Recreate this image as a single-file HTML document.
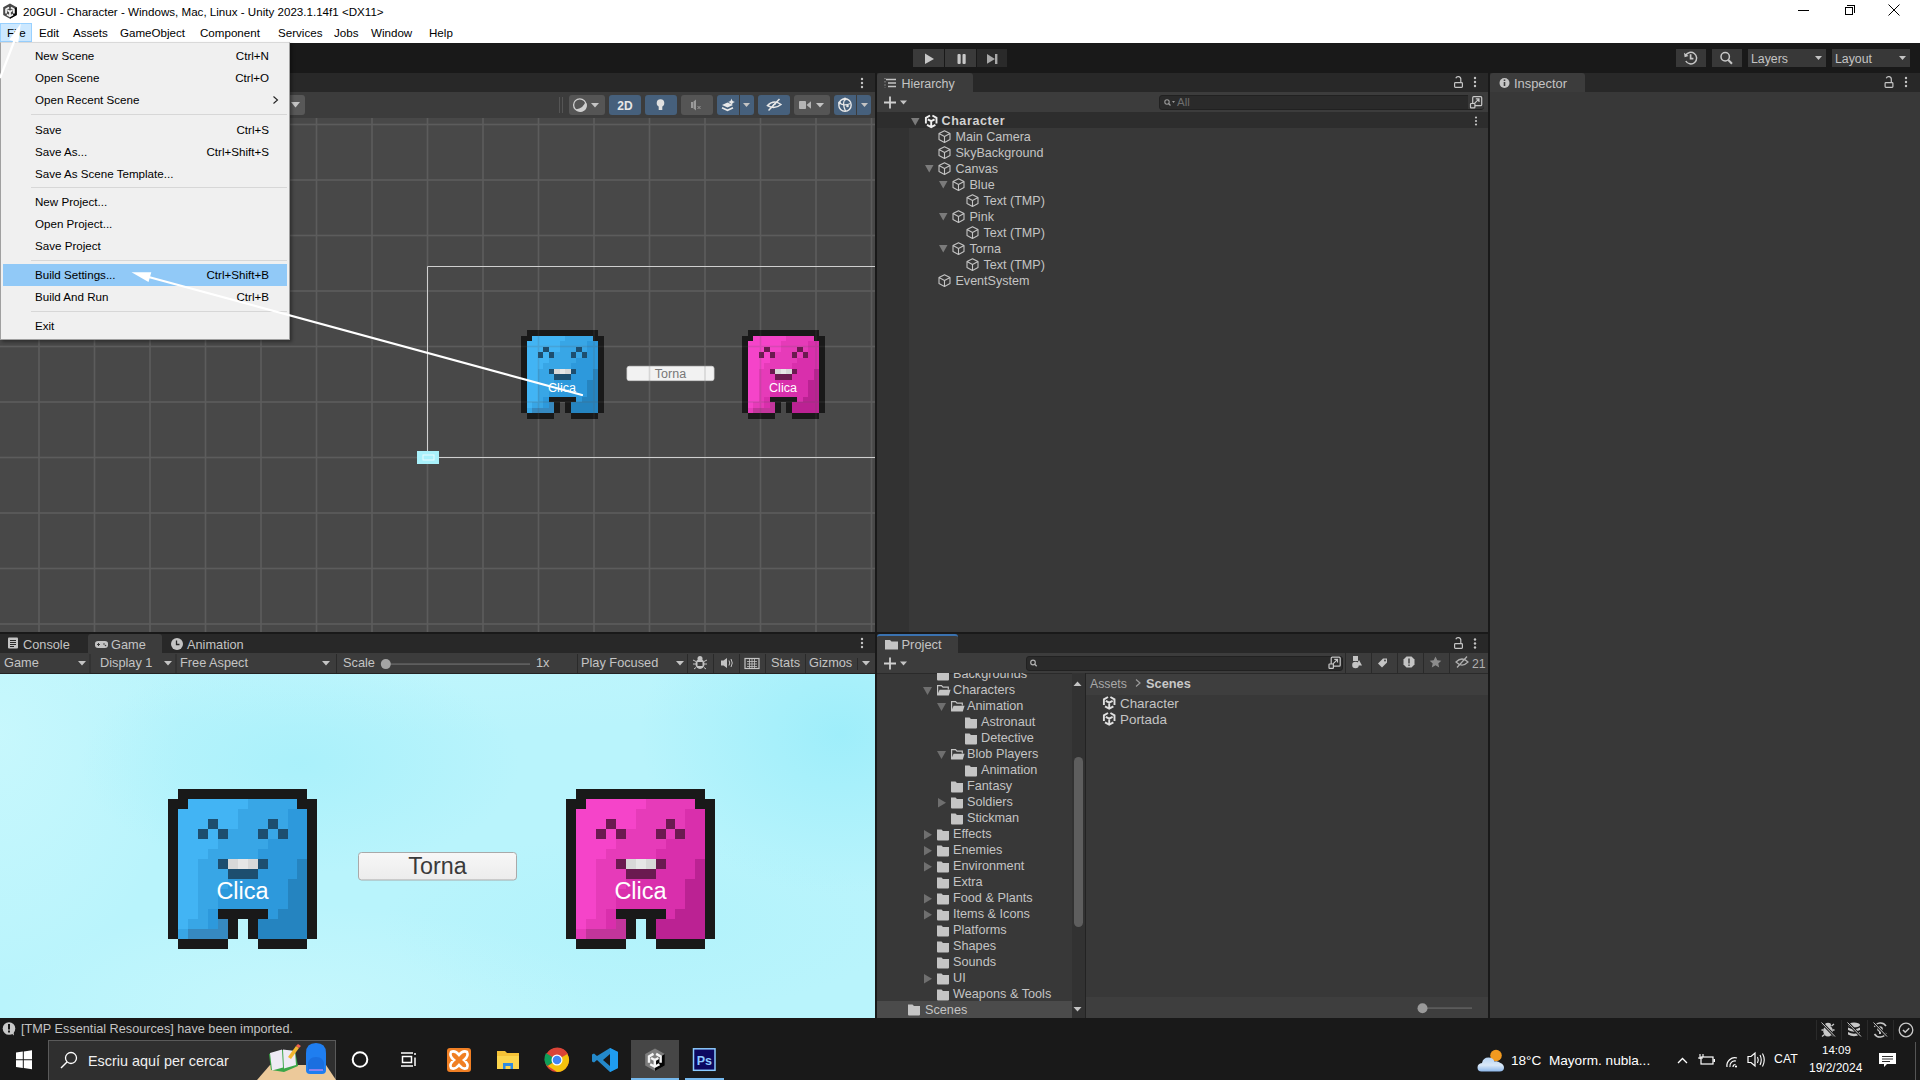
<!DOCTYPE html>
<html><head><meta charset="utf-8">
<style>
*{box-sizing:border-box;margin:0;padding:0}
html,body{width:1920px;height:1080px;overflow:hidden;background:#191919;font-family:"Liberation Sans",sans-serif;font-size:12px;color:#c4c4c4}
.a{position:absolute}
.t{position:absolute;white-space:nowrap;line-height:1}
#titlebar{left:0;top:0;width:1920px;height:43px;background:#fff}
.panel{position:absolute;background:#383838}
.tabbar{position:absolute;left:0;top:0;right:0;height:19px;background:#282828}
.tab{position:absolute;top:0;height:19px;background:#3c3c3c;border-radius:3px 3px 0 0}
</style></head>
<body>
<div id="titlebar" class="a"></div>
<!-- title -->

<div class="a" style="left:0;top:43px;width:1920px;height:30px;background:#191919"></div>
<!-- TITLE & MENU -->
<svg class="a" style="left:3px;top:3px" width="15" height="16"><path d="M7 0.5 L13.8 4.3 V11.9 L7 15.7 L0.2 11.9 V4.3Z" fill="#4a4a4a"/><path d="M13.8 4.3 V11.9 L7 15.7 V12.5 L11 10 V5.5Z" fill="#050505"/><g transform="translate(2.4,3.4) scale(0.74)" fill="none" stroke="#f0f0f0" stroke-width="2.4"><path d="M0.9 9.6 V3.9 L5 1.5 M7.4 1.5 L11.5 3.9 V9.6 M2 10.9 L6.2 13.2 L10.4 10.9 M2.8 5.3 L6.2 7.2 L9.6 5.3 M6.2 7.2 V13"/></g></svg>
<div class="t" id="title" style="left:23px;top:6px;color:#000;font-size:11.6px">20GUI - Character - Windows, Mac, Linux - Unity 2023.1.14f1 &lt;DX11&gt;</div>
<div class="a" style="left:1798px;top:10px;width:11px;height:1px;background:#000"></div>
<div class="a" style="left:1845px;top:7px;width:8px;height:8px;border:1px solid #000"></div>
<div class="a" style="left:1847px;top:5px;width:8px;height:8px;border-top:1px solid #000;border-right:1px solid #000"></div>
<svg class="a" style="left:1888px;top:4px" width="12" height="12"><path d="M0.5 0.5L11.5 11.5M11.5 0.5L0.5 11.5" stroke="#000" stroke-width="1"/></svg>
<div class="a" style="left:0;top:23px;width:32px;height:19px;background:#cce8ff;border:1px solid #99d1ff"></div>
<div class="t" style="left:7px;top:27px;color:#000;font-size:11.6px">File</div>
<div class="t" style="left:39px;top:27px;color:#000;font-size:11.6px">Edit</div>
<div class="t" style="left:73px;top:27px;color:#000;font-size:11.6px">Assets</div>
<div class="t" style="left:120px;top:27px;color:#000;font-size:11.6px">GameObject</div>
<div class="t" style="left:200px;top:27px;color:#000;font-size:11.6px">Component</div>
<div class="t" style="left:278px;top:27px;color:#000;font-size:11.6px">Services</div>
<div class="t" style="left:334px;top:27px;color:#000;font-size:11.6px">Jobs</div>
<div class="t" style="left:371px;top:27px;color:#000;font-size:11.6px">Window</div>
<div class="t" style="left:429px;top:27px;color:#000;font-size:11.6px">Help</div>
<!-- main toolbar buttons -->
<div class="a" style="left:913px;top:49px;width:31px;height:18px;background:#3a3a3a"></div>
<div class="a" style="left:945px;top:49px;width:31px;height:18px;background:#3a3a3a"></div>
<div class="a" style="left:977px;top:49px;width:30px;height:18px;background:#2a2a2a"></div>
<svg class="a" style="left:913px;top:49px" width="95" height="18"><path d="M12 4.5 L21 10 L12 15Z" fill="#c8c8c8"/><rect x="44.5" y="5" width="3.2" height="10" rx="1" fill="#c8c8c8"/><rect x="49.5" y="5" width="3.2" height="10" rx="1" fill="#c8c8c8"/><path d="M74 5 L82 10 L74 14.8Z" fill="#a8a8a8"/><rect x="82" y="5" width="2.4" height="10" fill="#a8a8a8"/></svg>










<!-- SCENE VIEW -->
<div class="a" style="left:0;top:73px;width:875px;height:19px;background:#282828"></div>
<div class="a" style="left:0;top:92px;width:875px;height:26px;background:#3c3c3c"></div>
<div class="a" style="left:0;top:118px;width:875px;height:514px;background:#484848;overflow:hidden">
<svg class="a" style="left:0;top:0" width="875" height="514">
<defs><g id="sb" shape-rendering="crispEdges"><rect x="1" y="0" width="13" height="1" fill="#191919"/><rect x="0" y="1" width="2" height="1" fill="#191919"/><rect x="2" y="1" width="6" height="1" fill="#42b4f4"/><rect x="8" y="1" width="5" height="1" fill="#38a6e6"/><rect x="13" y="1" width="2" height="1" fill="#191919"/><rect x="0" y="2" width="1" height="1" fill="#191919"/><rect x="1" y="2" width="6" height="1" fill="#42b4f4"/><rect x="7" y="2" width="5" height="1" fill="#38a6e6"/><rect x="12" y="2" width="2" height="1" fill="#2d99dc"/><rect x="14" y="2" width="1" height="1" fill="#191919"/><rect x="0" y="3" width="1" height="1" fill="#191919"/><rect x="1" y="3" width="3" height="1" fill="#42b4f4"/><rect x="4" y="3" width="1" height="1" fill="#1d4e6f"/><rect x="5" y="3" width="2" height="1" fill="#42b4f4"/><rect x="7" y="3" width="3" height="1" fill="#38a6e6"/><rect x="10" y="3" width="1" height="1" fill="#1d4e6f"/><rect x="11" y="3" width="1" height="1" fill="#38a6e6"/><rect x="12" y="3" width="2" height="1" fill="#2d99dc"/><rect x="14" y="3" width="1" height="1" fill="#191919"/><rect x="0" y="4" width="1" height="1" fill="#191919"/><rect x="1" y="4" width="2" height="1" fill="#42b4f4"/><rect x="3" y="4" width="1" height="1" fill="#1d4e6f"/><rect x="4" y="4" width="1" height="1" fill="#42b4f4"/><rect x="5" y="4" width="1" height="1" fill="#1d4e6f"/><rect x="6" y="4" width="3" height="1" fill="#38a6e6"/><rect x="9" y="4" width="1" height="1" fill="#1d4e6f"/><rect x="10" y="4" width="1" height="1" fill="#38a6e6"/><rect x="11" y="4" width="1" height="1" fill="#1d4e6f"/><rect x="12" y="4" width="2" height="1" fill="#2d99dc"/><rect x="14" y="4" width="1" height="1" fill="#191919"/><rect x="0" y="5" width="1" height="1" fill="#191919"/><rect x="1" y="5" width="4" height="1" fill="#42b4f4"/><rect x="5" y="5" width="5" height="1" fill="#38a6e6"/><rect x="10" y="5" width="4" height="1" fill="#2d99dc"/><rect x="14" y="5" width="1" height="1" fill="#191919"/><rect x="0" y="6" width="1" height="1" fill="#191919"/><rect x="1" y="6" width="3" height="1" fill="#42b4f4"/><rect x="4" y="6" width="5" height="1" fill="#38a6e6"/><rect x="9" y="6" width="5" height="1" fill="#2d99dc"/><rect x="14" y="6" width="1" height="1" fill="#191919"/><rect x="0" y="7" width="1" height="1" fill="#191919"/><rect x="1" y="7" width="2" height="1" fill="#42b4f4"/><rect x="3" y="7" width="2" height="1" fill="#38a6e6"/><rect x="5" y="7" width="1" height="1" fill="#1d4e6f"/><rect x="6" y="7" width="1" height="1" fill="#d8d8d8"/><rect x="7" y="7" width="1" height="1" fill="#e6e6e6"/><rect x="8" y="7" width="1" height="1" fill="#d8d8d8"/><rect x="9" y="7" width="1" height="1" fill="#1d4e6f"/><rect x="10" y="7" width="3" height="1" fill="#2d99dc"/><rect x="13" y="7" width="1" height="1" fill="#2584c0"/><rect x="14" y="7" width="1" height="1" fill="#191919"/><rect x="0" y="8" width="1" height="1" fill="#191919"/><rect x="1" y="8" width="2" height="1" fill="#42b4f4"/><rect x="3" y="8" width="3" height="1" fill="#38a6e6"/><rect x="6" y="8" width="3" height="1" fill="#1d4e6f"/><rect x="9" y="8" width="4" height="1" fill="#2d99dc"/><rect x="13" y="8" width="1" height="1" fill="#2584c0"/><rect x="14" y="8" width="1" height="1" fill="#191919"/><rect x="0" y="9" width="1" height="1" fill="#191919"/><rect x="1" y="9" width="2" height="1" fill="#42b4f4"/><rect x="3" y="9" width="3" height="1" fill="#38a6e6"/><rect x="6" y="9" width="6" height="1" fill="#2d99dc"/><rect x="12" y="9" width="2" height="1" fill="#2584c0"/><rect x="14" y="9" width="1" height="1" fill="#191919"/><rect x="0" y="10" width="1" height="1" fill="#191919"/><rect x="1" y="10" width="2" height="1" fill="#42b4f4"/><rect x="3" y="10" width="2" height="1" fill="#38a6e6"/><rect x="5" y="10" width="7" height="1" fill="#2d99dc"/><rect x="12" y="10" width="2" height="1" fill="#2584c0"/><rect x="14" y="10" width="1" height="1" fill="#191919"/><rect x="0" y="11" width="1" height="1" fill="#191919"/><rect x="1" y="11" width="2" height="1" fill="#42b4f4"/><rect x="3" y="11" width="2" height="1" fill="#38a6e6"/><rect x="5" y="11" width="7" height="1" fill="#2d99dc"/><rect x="12" y="11" width="2" height="1" fill="#2584c0"/><rect x="14" y="11" width="1" height="1" fill="#191919"/><rect x="0" y="12" width="1" height="1" fill="#191919"/><rect x="1" y="12" width="2" height="1" fill="#42b4f4"/><rect x="3" y="12" width="1" height="1" fill="#38a6e6"/><rect x="4" y="12" width="1" height="1" fill="#2d99dc"/><rect x="5" y="12" width="5" height="1" fill="#191919"/><rect x="10" y="12" width="1" height="1" fill="#2d99dc"/><rect x="11" y="12" width="3" height="1" fill="#2584c0"/><rect x="14" y="12" width="1" height="1" fill="#191919"/><rect x="0" y="13" width="1" height="1" fill="#191919"/><rect x="1" y="13" width="1" height="1" fill="#42b4f4"/><rect x="2" y="13" width="2" height="1" fill="#38a6e6"/><rect x="4" y="13" width="1" height="1" fill="#2d99dc"/><rect x="5" y="13" width="1" height="1" fill="#3689c0"/><rect x="6" y="13" width="1" height="1" fill="#191919"/><rect x="8" y="13" width="1" height="1" fill="#191919"/><rect x="9" y="13" width="5" height="1" fill="#2584c0"/><rect x="14" y="13" width="1" height="1" fill="#191919"/><rect x="0" y="14" width="1" height="1" fill="#191919"/><rect x="1" y="14" width="1" height="1" fill="#38a6e6"/><rect x="2" y="14" width="4" height="1" fill="#3689c0"/><rect x="6" y="14" width="1" height="1" fill="#191919"/><rect x="8" y="14" width="1" height="1" fill="#191919"/><rect x="9" y="14" width="5" height="1" fill="#2584c0"/><rect x="14" y="14" width="1" height="1" fill="#191919"/><rect x="1" y="15" width="5" height="1" fill="#191919"/><rect x="9" y="15" width="5" height="1" fill="#191919"/></g><g id="sp" shape-rendering="crispEdges"><rect x="1" y="0" width="13" height="1" fill="#191919"/><rect x="0" y="1" width="2" height="1" fill="#191919"/><rect x="2" y="1" width="6" height="1" fill="#f544c9"/><rect x="8" y="1" width="5" height="1" fill="#e63bb9"/><rect x="13" y="1" width="2" height="1" fill="#191919"/><rect x="0" y="2" width="1" height="1" fill="#191919"/><rect x="1" y="2" width="6" height="1" fill="#f544c9"/><rect x="7" y="2" width="5" height="1" fill="#e63bb9"/><rect x="12" y="2" width="2" height="1" fill="#d92fac"/><rect x="14" y="2" width="1" height="1" fill="#191919"/><rect x="0" y="3" width="1" height="1" fill="#191919"/><rect x="1" y="3" width="3" height="1" fill="#f544c9"/><rect x="4" y="3" width="1" height="1" fill="#6b1a50"/><rect x="5" y="3" width="2" height="1" fill="#f544c9"/><rect x="7" y="3" width="3" height="1" fill="#e63bb9"/><rect x="10" y="3" width="1" height="1" fill="#6b1a50"/><rect x="11" y="3" width="1" height="1" fill="#e63bb9"/><rect x="12" y="3" width="2" height="1" fill="#d92fac"/><rect x="14" y="3" width="1" height="1" fill="#191919"/><rect x="0" y="4" width="1" height="1" fill="#191919"/><rect x="1" y="4" width="2" height="1" fill="#f544c9"/><rect x="3" y="4" width="1" height="1" fill="#6b1a50"/><rect x="4" y="4" width="1" height="1" fill="#f544c9"/><rect x="5" y="4" width="1" height="1" fill="#6b1a50"/><rect x="6" y="4" width="3" height="1" fill="#e63bb9"/><rect x="9" y="4" width="1" height="1" fill="#6b1a50"/><rect x="10" y="4" width="1" height="1" fill="#e63bb9"/><rect x="11" y="4" width="1" height="1" fill="#6b1a50"/><rect x="12" y="4" width="2" height="1" fill="#d92fac"/><rect x="14" y="4" width="1" height="1" fill="#191919"/><rect x="0" y="5" width="1" height="1" fill="#191919"/><rect x="1" y="5" width="4" height="1" fill="#f544c9"/><rect x="5" y="5" width="5" height="1" fill="#e63bb9"/><rect x="10" y="5" width="4" height="1" fill="#d92fac"/><rect x="14" y="5" width="1" height="1" fill="#191919"/><rect x="0" y="6" width="1" height="1" fill="#191919"/><rect x="1" y="6" width="3" height="1" fill="#f544c9"/><rect x="4" y="6" width="5" height="1" fill="#e63bb9"/><rect x="9" y="6" width="5" height="1" fill="#d92fac"/><rect x="14" y="6" width="1" height="1" fill="#191919"/><rect x="0" y="7" width="1" height="1" fill="#191919"/><rect x="1" y="7" width="2" height="1" fill="#f544c9"/><rect x="3" y="7" width="2" height="1" fill="#e63bb9"/><rect x="5" y="7" width="1" height="1" fill="#6b1a50"/><rect x="6" y="7" width="1" height="1" fill="#d8d8d8"/><rect x="7" y="7" width="1" height="1" fill="#e6e6e6"/><rect x="8" y="7" width="1" height="1" fill="#d8d8d8"/><rect x="9" y="7" width="1" height="1" fill="#6b1a50"/><rect x="10" y="7" width="3" height="1" fill="#d92fac"/><rect x="13" y="7" width="1" height="1" fill="#bb2293"/><rect x="14" y="7" width="1" height="1" fill="#191919"/><rect x="0" y="8" width="1" height="1" fill="#191919"/><rect x="1" y="8" width="2" height="1" fill="#f544c9"/><rect x="3" y="8" width="3" height="1" fill="#e63bb9"/><rect x="6" y="8" width="3" height="1" fill="#6b1a50"/><rect x="9" y="8" width="4" height="1" fill="#d92fac"/><rect x="13" y="8" width="1" height="1" fill="#bb2293"/><rect x="14" y="8" width="1" height="1" fill="#191919"/><rect x="0" y="9" width="1" height="1" fill="#191919"/><rect x="1" y="9" width="2" height="1" fill="#f544c9"/><rect x="3" y="9" width="3" height="1" fill="#e63bb9"/><rect x="6" y="9" width="6" height="1" fill="#d92fac"/><rect x="12" y="9" width="2" height="1" fill="#bb2293"/><rect x="14" y="9" width="1" height="1" fill="#191919"/><rect x="0" y="10" width="1" height="1" fill="#191919"/><rect x="1" y="10" width="2" height="1" fill="#f544c9"/><rect x="3" y="10" width="2" height="1" fill="#e63bb9"/><rect x="5" y="10" width="7" height="1" fill="#d92fac"/><rect x="12" y="10" width="2" height="1" fill="#bb2293"/><rect x="14" y="10" width="1" height="1" fill="#191919"/><rect x="0" y="11" width="1" height="1" fill="#191919"/><rect x="1" y="11" width="2" height="1" fill="#f544c9"/><rect x="3" y="11" width="2" height="1" fill="#e63bb9"/><rect x="5" y="11" width="7" height="1" fill="#d92fac"/><rect x="12" y="11" width="2" height="1" fill="#bb2293"/><rect x="14" y="11" width="1" height="1" fill="#191919"/><rect x="0" y="12" width="1" height="1" fill="#191919"/><rect x="1" y="12" width="2" height="1" fill="#f544c9"/><rect x="3" y="12" width="1" height="1" fill="#e63bb9"/><rect x="4" y="12" width="1" height="1" fill="#d92fac"/><rect x="5" y="12" width="5" height="1" fill="#191919"/><rect x="10" y="12" width="1" height="1" fill="#d92fac"/><rect x="11" y="12" width="3" height="1" fill="#bb2293"/><rect x="14" y="12" width="1" height="1" fill="#191919"/><rect x="0" y="13" width="1" height="1" fill="#191919"/><rect x="1" y="13" width="1" height="1" fill="#f544c9"/><rect x="2" y="13" width="2" height="1" fill="#e63bb9"/><rect x="4" y="13" width="1" height="1" fill="#d92fac"/><rect x="5" y="13" width="1" height="1" fill="#c2359b"/><rect x="6" y="13" width="1" height="1" fill="#191919"/><rect x="8" y="13" width="1" height="1" fill="#191919"/><rect x="9" y="13" width="5" height="1" fill="#bb2293"/><rect x="14" y="13" width="1" height="1" fill="#191919"/><rect x="0" y="14" width="1" height="1" fill="#191919"/><rect x="1" y="14" width="1" height="1" fill="#e63bb9"/><rect x="2" y="14" width="4" height="1" fill="#c2359b"/><rect x="6" y="14" width="1" height="1" fill="#191919"/><rect x="8" y="14" width="1" height="1" fill="#191919"/><rect x="9" y="14" width="5" height="1" fill="#bb2293"/><rect x="14" y="14" width="1" height="1" fill="#191919"/><rect x="1" y="15" width="5" height="1" fill="#191919"/><rect x="9" y="15" width="5" height="1" fill="#191919"/></g></defs>
<g fill="#5c5c5c" ><rect x="38.20" y="0" width="1.6" height="514"/><rect x="93.70" y="0" width="1.6" height="514"/><rect x="149.20" y="0" width="1.6" height="514"/><rect x="204.70" y="0" width="1.6" height="514"/><rect x="260.20" y="0" width="1.6" height="514"/><rect x="315.70" y="0" width="1.6" height="514"/><rect x="371.20" y="0" width="1.6" height="514"/><rect x="426.70" y="0" width="1.6" height="514"/><rect x="482.20" y="0" width="1.6" height="514"/><rect x="537.70" y="0" width="1.6" height="514"/><rect x="593.20" y="0" width="1.6" height="514"/><rect x="648.70" y="0" width="1.6" height="514"/><rect x="704.20" y="0" width="1.6" height="514"/><rect x="759.70" y="0" width="1.6" height="514"/><rect x="815.20" y="0" width="1.6" height="514"/><rect x="870.70" y="0" width="1.6" height="514"/><rect x="0" y="5.70" width="875" height="1.6"/><rect x="0" y="61.20" width="875" height="1.6"/><rect x="0" y="116.70" width="875" height="1.6"/><rect x="0" y="172.20" width="875" height="1.6"/><rect x="0" y="227.70" width="875" height="1.6"/><rect x="0" y="283.20" width="875" height="1.6"/><rect x="0" y="338.70" width="875" height="1.6"/><rect x="0" y="394.20" width="875" height="1.6"/><rect x="0" y="449.70" width="875" height="1.6"/><rect x="0" y="505.20" width="875" height="1.6"/></g><use href="#sb" transform="translate(521,212) scale(5.517,5.547)"/>
<use href="#sp" transform="translate(742,212) scale(5.517,5.547)"/>
<text x="562" y="274" font-family="Liberation Sans" font-size="12.5" fill="#fff" text-anchor="middle">Clica</text>
<text x="783" y="274" font-family="Liberation Sans" font-size="12.5" fill="#fff" text-anchor="middle">Clica</text>
<rect x="627" y="248.3" width="87" height="14.3" rx="2.2" fill="#f2f2f2" stroke="#d8d8d8" stroke-width="0.8"/>
<text x="670.5" y="259.5" font-family="Liberation Sans" font-size="12.5" fill="#777" text-anchor="middle">Torna</text>

<g fill="#5c5c5c" opacity="0.18"><rect x="38.20" y="0" width="1.6" height="514"/><rect x="93.70" y="0" width="1.6" height="514"/><rect x="149.20" y="0" width="1.6" height="514"/><rect x="204.70" y="0" width="1.6" height="514"/><rect x="260.20" y="0" width="1.6" height="514"/><rect x="315.70" y="0" width="1.6" height="514"/><rect x="371.20" y="0" width="1.6" height="514"/><rect x="426.70" y="0" width="1.6" height="514"/><rect x="482.20" y="0" width="1.6" height="514"/><rect x="537.70" y="0" width="1.6" height="514"/><rect x="593.20" y="0" width="1.6" height="514"/><rect x="648.70" y="0" width="1.6" height="514"/><rect x="704.20" y="0" width="1.6" height="514"/><rect x="759.70" y="0" width="1.6" height="514"/><rect x="815.20" y="0" width="1.6" height="514"/><rect x="870.70" y="0" width="1.6" height="514"/><rect x="0" y="5.70" width="875" height="1.6"/><rect x="0" y="61.20" width="875" height="1.6"/><rect x="0" y="116.70" width="875" height="1.6"/><rect x="0" y="172.20" width="875" height="1.6"/><rect x="0" y="227.70" width="875" height="1.6"/><rect x="0" y="283.20" width="875" height="1.6"/><rect x="0" y="338.70" width="875" height="1.6"/><rect x="0" y="394.20" width="875" height="1.6"/><rect x="0" y="449.70" width="875" height="1.6"/><rect x="0" y="505.20" width="875" height="1.6"/></g><path d="M427.5 148.5 H875 M427.5 148.5 V339.5 H875" fill="none" stroke="#cfcfcf" stroke-width="1"/>
<rect x="417" y="333" width="22" height="13" fill="#a9f1fb"/>
<rect x="423" y="337" width="11" height="5" fill="none" stroke="#e8fbff" stroke-width="1"/>
</svg>
</div>
<!-- scene toolbar -->
<div class="a" style="left:270px;top:95px;width:35px;height:20px;background:#585858;border-radius:3px"></div>
<svg class="a" style="left:291px;top:102px" width="9" height="6"><path d="M0 0H9L4.5 5.5Z" fill="#c4c4c4"/></svg>
<div class="a" style="left:559px;top:97px;width:1px;height:16px;background:#555"></div>
<div class="a" style="left:562px;top:97px;width:1px;height:16px;background:#555"></div>
<div class="a" style="left:569px;top:95px;width:36px;height:20px;background:#555;border-radius:3px"></div>
<div class="a" style="left:609px;top:95px;width:32px;height:20px;background:#46607c;border-radius:3px"></div>
<div class="a" style="left:645px;top:95px;width:32px;height:20px;background:#46607c;border-radius:3px"></div>
<div class="a" style="left:681px;top:95px;width:32px;height:20px;background:#555;border-radius:3px"></div>
<div class="a" style="left:717px;top:95px;width:37px;height:20px;background:#46607c;border-radius:3px"></div>
<div class="a" style="left:739px;top:95px;width:1px;height:20px;background:#3c3c3c"></div>
<div class="a" style="left:758px;top:95px;width:32px;height:20px;background:#46607c;border-radius:3px"></div>
<div class="a" style="left:794px;top:95px;width:36px;height:20px;background:#555;border-radius:3px"></div>
<div class="a" style="left:834px;top:95px;width:37px;height:20px;background:#46607c;border-radius:3px"></div>
<div class="a" style="left:856px;top:95px;width:1px;height:20px;background:#3c3c3c"></div>
<svg class="a" style="left:560px;top:92px" width="315" height="26">
 <circle cx="19.8" cy="13" r="6.2" fill="none" stroke="#cfcfcf" stroke-width="1.3"/><path d="M15.5 17.5 A6.2 6.2 0 0 0 25.5 9.5 Q24 16 15.5 17.5Z" fill="#cfcfcf"/>
 <path d="M31 11H39L35 15.5Z" fill="#c4c4c4"/>
 <text x="65" y="17.5" font-family="Liberation Sans" font-weight="bold" font-size="12" fill="#e6e6e6" text-anchor="middle">2D</text>
 <circle cx="100.5" cy="11" r="3.8" fill="#e0e0e0"/><rect x="98.7" y="14" width="3.6" height="4" fill="#e0e0e0"/>
 <path d="M131 10h2v6h-2z M133.5 9.5 L136 7.5 V18.5 L133.5 16.5Z" fill="#9a9a9a"/><path d="M137.5 14 l3 3 M140.5 14 l-3 3" stroke="#9a9a9a" stroke-width="1"/>
 <path d="M162 13 L167.5 10.5 L173 13 L167.5 15.5Z" fill="#e8e8e8"/><path d="M162 15.8 L167.5 18.3 L173 15.8" fill="none" stroke="#e8e8e8" stroke-width="1.7"/><path d="M171.5 6.5 Q172 9.5 175 10 Q172 10.5 171.5 13.5 Q171 10.5 168 10 Q171 9.5 171.5 6.5Z" fill="#e8e8e8"/>
 <path d="M183 11H190L186.5 15Z" fill="#c4c4c4"/>
 <path d="M207.5 13.5 Q214 7 221 12.5 Q214.5 18 207.5 13.5Z" fill="none" stroke="#e8e8e8" stroke-width="1.5"/><path d="M208.5 18.5 L219.5 7" stroke="#e8e8e8" stroke-width="1.5"/><path d="M213 15 a2.5 2.5 0 0 1 3 -3" fill="none" stroke="#e8e8e8" stroke-width="1.2"/>
 <rect x="239" y="9" width="7" height="8" rx="0.8" fill="#b4b4b4"/><path d="M246.5 13 L251 9.3 V16.7Z" fill="#b4b4b4"/>
 <path d="M256 11H264L260 15.5Z" fill="#c4c4c4"/>
 <circle cx="285" cy="13" r="6.2" fill="none" stroke="#e8e8e8" stroke-width="1.4"/><path d="M279.5 11 Q284 14.5 290.5 11.5 M285 7 Q282 12 285.5 19" fill="none" stroke="#e8e8e8" stroke-width="1.2"/><circle cx="285" cy="7" r="1.6" fill="#e8e8e8"/><circle cx="279.5" cy="11" r="1.4" fill="#e8e8e8"/><circle cx="287.5" cy="14" r="1.3" fill="#e8e8e8"/>
 <path d="M301 11H308L304.5 15Z" fill="#c4c4c4"/>
</svg>
<svg class="a" style="left:860px;top:77px" width="4" height="12"><circle cx="2" cy="2" r="1.2" fill="#c4c4c4"/><circle cx="2" cy="6" r="1.2" fill="#c4c4c4"/><circle cx="2" cy="10" r="1.2" fill="#c4c4c4"/></svg>
<!-- END SCENE VIEW -->

<!-- GAME PANEL -->
<div class="a" style="left:0;top:634px;width:875px;height:19px;background:#282828"></div>
<div class="a" style="left:88px;top:634px;width:74px;height:19px;background:#3c3c3c;border-radius:3px 3px 0 0"></div>
<div class="a" style="left:0;top:653px;width:875px;height:20px;background:#3c3c3c"></div>
<div class="a" style="left:0;top:673px;width:875px;height:1px;background:#232323"></div>
<svg class="a" style="left:0;top:634px" width="875" height="40">
 <rect x="8" y="3.5" width="10" height="11" fill="#c4c4c4" rx="1"/><path d="M10 6.5h6M10 8.5h6M10 10.5h6M10 12.5h4" stroke="#282828" stroke-width="1"/>
 <g transform="translate(0,2)"><path d="M95 7.5 Q95 5 98 5 H105 Q108 5 108 7.5 V9 Q108 12 105 12 H98 Q95 12 95 9Z" fill="#c4c4c4"/><path d="M97 8.5h3M98.5 7v3" stroke="#3c3c3c" stroke-width="1"/><circle cx="104" cy="8" r="0.8" fill="#3c3c3c"/><circle cx="105.5" cy="9.5" r="0.8" fill="#3c3c3c"/></g>
 <circle cx="177" cy="10" r="6" fill="#c4c4c4"/><path d="M176.5 6.5v4h3" stroke="#282828" stroke-width="1.3" fill="none"/>
 <path d="M78 27H86L82 31.5Z M164 27H172L168 31.5Z M322 27H330L326 31.5Z" fill="#c4c4c4"/>
 <rect x="89.5" y="20" width="1" height="19" fill="#2a2a2a"/><rect x="175.5" y="20" width="1" height="19" fill="#2a2a2a"/><rect x="336" y="20" width="1" height="19" fill="#2a2a2a"/>
 <rect x="386" y="29.3" width="144" height="1.6" fill="#626262"/><circle cx="385.8" cy="30.1" r="5" fill="#a4a4a4"/>
 <rect x="577" y="20" width="1" height="19" fill="#2a2a2a"/><path d="M676 27H684L680 31.5Z" fill="#c4c4c4"/>
 <rect x="687" y="20" width="1" height="19" fill="#2a2a2a"/><rect x="713" y="20" width="1" height="19" fill="#2a2a2a"/><rect x="739" y="20" width="1" height="19" fill="#2a2a2a"/><rect x="765" y="20" width="1" height="19" fill="#2a2a2a"/><rect x="805" y="20" width="1" height="19" fill="#2a2a2a"/>
 <rect x="857" y="24" width="1" height="12" fill="#2a2a2a"/><path d="M862 27H870L866 31.5Z" fill="#c4c4c4"/>
 <g fill="#c4c4c4"><ellipse cx="700" cy="30" rx="4.5" ry="5"/><circle cx="700" cy="24.5" r="2.5"/></g><path d="M693 26l3 1.5M707 26l-3 1.5M693 30h3M707 30h-3M694 35l2-1.5M706 35l-2-1.5" stroke="#c4c4c4" stroke-width="1"/><rect x="697.5" y="28" width="5" height="4" fill="#3c3c3c"/>
 <path d="M721 26.5h2.5v5h-2.5z M723.5 26.5 L727 24 V34 L723.5 31.5Z" fill="#c4c4c4"/><path d="M729 26.5q1.5 2.5 0 5M731 25q2.5 4 0 8" stroke="#c4c4c4" stroke-width="1" fill="none"/>
 <rect x="745" y="24.5" width="14" height="10" fill="none" stroke="#c4c4c4" stroke-width="1.2"/><path d="M747 27.5h10M747 30h10M747 32.5h10M749.5 25v9M752 25v9M754.5 25v9" stroke="#c4c4c4" stroke-width="0.8"/>
 <circle cx="862" cy="5" r="1.2" fill="#c4c4c4"/><circle cx="862" cy="9" r="1.2" fill="#c4c4c4"/><circle cx="862" cy="13" r="1.2" fill="#c4c4c4"/>
</svg>
<div class="t" style="left:23px;top:638.6px;font-size:12.75px;color:#c4c4c4">Console</div>
<div class="t" style="left:111px;top:638.6px;font-size:12.75px;color:#c4c4c4">Game</div>
<div class="t" style="left:187px;top:638.6px;font-size:12.75px;color:#c4c4c4">Animation</div>
<div class="t" style="left:4px;top:657px;font-size:12.75px;color:#c4c4c4">Game</div>
<div class="t" style="left:100px;top:657px;font-size:12.75px;color:#c4c4c4">Display 1</div>
<div class="t" style="left:180px;top:657px;font-size:12.75px;color:#c4c4c4">Free Aspect</div>
<div class="t" style="left:343px;top:657px;font-size:12.75px;color:#c4c4c4">Scale</div>
<div class="t" style="left:536px;top:657px;font-size:12.75px;color:#c4c4c4">1x</div>
<div class="t" style="left:581px;top:657px;font-size:12.75px;color:#c4c4c4">Play Focused</div>
<div class="t" style="left:771px;top:657px;font-size:12.75px;color:#c4c4c4">Stats</div>
<div class="t" style="left:809px;top:657px;font-size:12.75px;color:#c4c4c4">Gizmos</div>
<div class="a" style="left:0;top:674px;width:875px;height:344px;background:#b9f4fc;overflow:hidden">
 <div class="a" style="left:0;top:0;width:875px;height:344px;background:radial-gradient(ellipse 220px 110px at 300px 90px, rgba(158,238,250,0.55), transparent), radial-gradient(ellipse 200px 160px at 840px 60px, rgba(150,236,250,0.75), transparent), radial-gradient(ellipse 260px 90px at 640px 250px, rgba(165,240,250,0.35), transparent), radial-gradient(ellipse 300px 100px at 300px 330px, rgba(205,249,253,0.6), transparent), radial-gradient(ellipse 180px 260px at 0px 60px, rgba(205,249,253,0.7), transparent), radial-gradient(ellipse 400px 60px at 420px 0px, rgba(195,247,253,0.5), transparent)"></div>
 <svg class="a" style="left:0;top:0" width="875" height="344">
  <defs><g id="gb" shape-rendering="crispEdges"><rect x="1" y="0" width="13" height="1" fill="#191919"/><rect x="0" y="1" width="2" height="1" fill="#191919"/><rect x="2" y="1" width="6" height="1" fill="#42b4f4"/><rect x="8" y="1" width="5" height="1" fill="#38a6e6"/><rect x="13" y="1" width="2" height="1" fill="#191919"/><rect x="0" y="2" width="1" height="1" fill="#191919"/><rect x="1" y="2" width="6" height="1" fill="#42b4f4"/><rect x="7" y="2" width="5" height="1" fill="#38a6e6"/><rect x="12" y="2" width="2" height="1" fill="#2d99dc"/><rect x="14" y="2" width="1" height="1" fill="#191919"/><rect x="0" y="3" width="1" height="1" fill="#191919"/><rect x="1" y="3" width="3" height="1" fill="#42b4f4"/><rect x="4" y="3" width="1" height="1" fill="#1d4e6f"/><rect x="5" y="3" width="2" height="1" fill="#42b4f4"/><rect x="7" y="3" width="3" height="1" fill="#38a6e6"/><rect x="10" y="3" width="1" height="1" fill="#1d4e6f"/><rect x="11" y="3" width="1" height="1" fill="#38a6e6"/><rect x="12" y="3" width="2" height="1" fill="#2d99dc"/><rect x="14" y="3" width="1" height="1" fill="#191919"/><rect x="0" y="4" width="1" height="1" fill="#191919"/><rect x="1" y="4" width="2" height="1" fill="#42b4f4"/><rect x="3" y="4" width="1" height="1" fill="#1d4e6f"/><rect x="4" y="4" width="1" height="1" fill="#42b4f4"/><rect x="5" y="4" width="1" height="1" fill="#1d4e6f"/><rect x="6" y="4" width="3" height="1" fill="#38a6e6"/><rect x="9" y="4" width="1" height="1" fill="#1d4e6f"/><rect x="10" y="4" width="1" height="1" fill="#38a6e6"/><rect x="11" y="4" width="1" height="1" fill="#1d4e6f"/><rect x="12" y="4" width="2" height="1" fill="#2d99dc"/><rect x="14" y="4" width="1" height="1" fill="#191919"/><rect x="0" y="5" width="1" height="1" fill="#191919"/><rect x="1" y="5" width="4" height="1" fill="#42b4f4"/><rect x="5" y="5" width="5" height="1" fill="#38a6e6"/><rect x="10" y="5" width="4" height="1" fill="#2d99dc"/><rect x="14" y="5" width="1" height="1" fill="#191919"/><rect x="0" y="6" width="1" height="1" fill="#191919"/><rect x="1" y="6" width="3" height="1" fill="#42b4f4"/><rect x="4" y="6" width="5" height="1" fill="#38a6e6"/><rect x="9" y="6" width="5" height="1" fill="#2d99dc"/><rect x="14" y="6" width="1" height="1" fill="#191919"/><rect x="0" y="7" width="1" height="1" fill="#191919"/><rect x="1" y="7" width="2" height="1" fill="#42b4f4"/><rect x="3" y="7" width="2" height="1" fill="#38a6e6"/><rect x="5" y="7" width="1" height="1" fill="#1d4e6f"/><rect x="6" y="7" width="1" height="1" fill="#d8d8d8"/><rect x="7" y="7" width="1" height="1" fill="#e6e6e6"/><rect x="8" y="7" width="1" height="1" fill="#d8d8d8"/><rect x="9" y="7" width="1" height="1" fill="#1d4e6f"/><rect x="10" y="7" width="3" height="1" fill="#2d99dc"/><rect x="13" y="7" width="1" height="1" fill="#2584c0"/><rect x="14" y="7" width="1" height="1" fill="#191919"/><rect x="0" y="8" width="1" height="1" fill="#191919"/><rect x="1" y="8" width="2" height="1" fill="#42b4f4"/><rect x="3" y="8" width="3" height="1" fill="#38a6e6"/><rect x="6" y="8" width="3" height="1" fill="#1d4e6f"/><rect x="9" y="8" width="4" height="1" fill="#2d99dc"/><rect x="13" y="8" width="1" height="1" fill="#2584c0"/><rect x="14" y="8" width="1" height="1" fill="#191919"/><rect x="0" y="9" width="1" height="1" fill="#191919"/><rect x="1" y="9" width="2" height="1" fill="#42b4f4"/><rect x="3" y="9" width="3" height="1" fill="#38a6e6"/><rect x="6" y="9" width="6" height="1" fill="#2d99dc"/><rect x="12" y="9" width="2" height="1" fill="#2584c0"/><rect x="14" y="9" width="1" height="1" fill="#191919"/><rect x="0" y="10" width="1" height="1" fill="#191919"/><rect x="1" y="10" width="2" height="1" fill="#42b4f4"/><rect x="3" y="10" width="2" height="1" fill="#38a6e6"/><rect x="5" y="10" width="7" height="1" fill="#2d99dc"/><rect x="12" y="10" width="2" height="1" fill="#2584c0"/><rect x="14" y="10" width="1" height="1" fill="#191919"/><rect x="0" y="11" width="1" height="1" fill="#191919"/><rect x="1" y="11" width="2" height="1" fill="#42b4f4"/><rect x="3" y="11" width="2" height="1" fill="#38a6e6"/><rect x="5" y="11" width="7" height="1" fill="#2d99dc"/><rect x="12" y="11" width="2" height="1" fill="#2584c0"/><rect x="14" y="11" width="1" height="1" fill="#191919"/><rect x="0" y="12" width="1" height="1" fill="#191919"/><rect x="1" y="12" width="2" height="1" fill="#42b4f4"/><rect x="3" y="12" width="1" height="1" fill="#38a6e6"/><rect x="4" y="12" width="1" height="1" fill="#2d99dc"/><rect x="5" y="12" width="5" height="1" fill="#191919"/><rect x="10" y="12" width="1" height="1" fill="#2d99dc"/><rect x="11" y="12" width="3" height="1" fill="#2584c0"/><rect x="14" y="12" width="1" height="1" fill="#191919"/><rect x="0" y="13" width="1" height="1" fill="#191919"/><rect x="1" y="13" width="1" height="1" fill="#42b4f4"/><rect x="2" y="13" width="2" height="1" fill="#38a6e6"/><rect x="4" y="13" width="1" height="1" fill="#2d99dc"/><rect x="5" y="13" width="1" height="1" fill="#3689c0"/><rect x="6" y="13" width="1" height="1" fill="#191919"/><rect x="8" y="13" width="1" height="1" fill="#191919"/><rect x="9" y="13" width="5" height="1" fill="#2584c0"/><rect x="14" y="13" width="1" height="1" fill="#191919"/><rect x="0" y="14" width="1" height="1" fill="#191919"/><rect x="1" y="14" width="1" height="1" fill="#38a6e6"/><rect x="2" y="14" width="4" height="1" fill="#3689c0"/><rect x="6" y="14" width="1" height="1" fill="#191919"/><rect x="8" y="14" width="1" height="1" fill="#191919"/><rect x="9" y="14" width="5" height="1" fill="#2584c0"/><rect x="14" y="14" width="1" height="1" fill="#191919"/><rect x="1" y="15" width="5" height="1" fill="#191919"/><rect x="9" y="15" width="5" height="1" fill="#191919"/></g><g id="gp" shape-rendering="crispEdges"><rect x="1" y="0" width="13" height="1" fill="#191919"/><rect x="0" y="1" width="2" height="1" fill="#191919"/><rect x="2" y="1" width="6" height="1" fill="#f544c9"/><rect x="8" y="1" width="5" height="1" fill="#e63bb9"/><rect x="13" y="1" width="2" height="1" fill="#191919"/><rect x="0" y="2" width="1" height="1" fill="#191919"/><rect x="1" y="2" width="6" height="1" fill="#f544c9"/><rect x="7" y="2" width="5" height="1" fill="#e63bb9"/><rect x="12" y="2" width="2" height="1" fill="#d92fac"/><rect x="14" y="2" width="1" height="1" fill="#191919"/><rect x="0" y="3" width="1" height="1" fill="#191919"/><rect x="1" y="3" width="3" height="1" fill="#f544c9"/><rect x="4" y="3" width="1" height="1" fill="#6b1a50"/><rect x="5" y="3" width="2" height="1" fill="#f544c9"/><rect x="7" y="3" width="3" height="1" fill="#e63bb9"/><rect x="10" y="3" width="1" height="1" fill="#6b1a50"/><rect x="11" y="3" width="1" height="1" fill="#e63bb9"/><rect x="12" y="3" width="2" height="1" fill="#d92fac"/><rect x="14" y="3" width="1" height="1" fill="#191919"/><rect x="0" y="4" width="1" height="1" fill="#191919"/><rect x="1" y="4" width="2" height="1" fill="#f544c9"/><rect x="3" y="4" width="1" height="1" fill="#6b1a50"/><rect x="4" y="4" width="1" height="1" fill="#f544c9"/><rect x="5" y="4" width="1" height="1" fill="#6b1a50"/><rect x="6" y="4" width="3" height="1" fill="#e63bb9"/><rect x="9" y="4" width="1" height="1" fill="#6b1a50"/><rect x="10" y="4" width="1" height="1" fill="#e63bb9"/><rect x="11" y="4" width="1" height="1" fill="#6b1a50"/><rect x="12" y="4" width="2" height="1" fill="#d92fac"/><rect x="14" y="4" width="1" height="1" fill="#191919"/><rect x="0" y="5" width="1" height="1" fill="#191919"/><rect x="1" y="5" width="4" height="1" fill="#f544c9"/><rect x="5" y="5" width="5" height="1" fill="#e63bb9"/><rect x="10" y="5" width="4" height="1" fill="#d92fac"/><rect x="14" y="5" width="1" height="1" fill="#191919"/><rect x="0" y="6" width="1" height="1" fill="#191919"/><rect x="1" y="6" width="3" height="1" fill="#f544c9"/><rect x="4" y="6" width="5" height="1" fill="#e63bb9"/><rect x="9" y="6" width="5" height="1" fill="#d92fac"/><rect x="14" y="6" width="1" height="1" fill="#191919"/><rect x="0" y="7" width="1" height="1" fill="#191919"/><rect x="1" y="7" width="2" height="1" fill="#f544c9"/><rect x="3" y="7" width="2" height="1" fill="#e63bb9"/><rect x="5" y="7" width="1" height="1" fill="#6b1a50"/><rect x="6" y="7" width="1" height="1" fill="#d8d8d8"/><rect x="7" y="7" width="1" height="1" fill="#e6e6e6"/><rect x="8" y="7" width="1" height="1" fill="#d8d8d8"/><rect x="9" y="7" width="1" height="1" fill="#6b1a50"/><rect x="10" y="7" width="3" height="1" fill="#d92fac"/><rect x="13" y="7" width="1" height="1" fill="#bb2293"/><rect x="14" y="7" width="1" height="1" fill="#191919"/><rect x="0" y="8" width="1" height="1" fill="#191919"/><rect x="1" y="8" width="2" height="1" fill="#f544c9"/><rect x="3" y="8" width="3" height="1" fill="#e63bb9"/><rect x="6" y="8" width="3" height="1" fill="#6b1a50"/><rect x="9" y="8" width="4" height="1" fill="#d92fac"/><rect x="13" y="8" width="1" height="1" fill="#bb2293"/><rect x="14" y="8" width="1" height="1" fill="#191919"/><rect x="0" y="9" width="1" height="1" fill="#191919"/><rect x="1" y="9" width="2" height="1" fill="#f544c9"/><rect x="3" y="9" width="3" height="1" fill="#e63bb9"/><rect x="6" y="9" width="6" height="1" fill="#d92fac"/><rect x="12" y="9" width="2" height="1" fill="#bb2293"/><rect x="14" y="9" width="1" height="1" fill="#191919"/><rect x="0" y="10" width="1" height="1" fill="#191919"/><rect x="1" y="10" width="2" height="1" fill="#f544c9"/><rect x="3" y="10" width="2" height="1" fill="#e63bb9"/><rect x="5" y="10" width="7" height="1" fill="#d92fac"/><rect x="12" y="10" width="2" height="1" fill="#bb2293"/><rect x="14" y="10" width="1" height="1" fill="#191919"/><rect x="0" y="11" width="1" height="1" fill="#191919"/><rect x="1" y="11" width="2" height="1" fill="#f544c9"/><rect x="3" y="11" width="2" height="1" fill="#e63bb9"/><rect x="5" y="11" width="7" height="1" fill="#d92fac"/><rect x="12" y="11" width="2" height="1" fill="#bb2293"/><rect x="14" y="11" width="1" height="1" fill="#191919"/><rect x="0" y="12" width="1" height="1" fill="#191919"/><rect x="1" y="12" width="2" height="1" fill="#f544c9"/><rect x="3" y="12" width="1" height="1" fill="#e63bb9"/><rect x="4" y="12" width="1" height="1" fill="#d92fac"/><rect x="5" y="12" width="5" height="1" fill="#191919"/><rect x="10" y="12" width="1" height="1" fill="#d92fac"/><rect x="11" y="12" width="3" height="1" fill="#bb2293"/><rect x="14" y="12" width="1" height="1" fill="#191919"/><rect x="0" y="13" width="1" height="1" fill="#191919"/><rect x="1" y="13" width="1" height="1" fill="#f544c9"/><rect x="2" y="13" width="2" height="1" fill="#e63bb9"/><rect x="4" y="13" width="1" height="1" fill="#d92fac"/><rect x="5" y="13" width="1" height="1" fill="#c2359b"/><rect x="6" y="13" width="1" height="1" fill="#191919"/><rect x="8" y="13" width="1" height="1" fill="#191919"/><rect x="9" y="13" width="5" height="1" fill="#bb2293"/><rect x="14" y="13" width="1" height="1" fill="#191919"/><rect x="0" y="14" width="1" height="1" fill="#191919"/><rect x="1" y="14" width="1" height="1" fill="#e63bb9"/><rect x="2" y="14" width="4" height="1" fill="#c2359b"/><rect x="6" y="14" width="1" height="1" fill="#191919"/><rect x="8" y="14" width="1" height="1" fill="#191919"/><rect x="9" y="14" width="5" height="1" fill="#bb2293"/><rect x="14" y="14" width="1" height="1" fill="#191919"/><rect x="1" y="15" width="5" height="1" fill="#191919"/><rect x="9" y="15" width="5" height="1" fill="#191919"/></g></defs>
  <use href="#gb" transform="translate(168.1,115) scale(9.953,10)"/>
  <use href="#gp" transform="translate(566,115) scale(9.953,10)"/>
  <text x="242.5" y="225" font-family="Liberation Sans" font-size="23.5" fill="#fff" text-anchor="middle">Clica</text>
  <text x="640.5" y="225" font-family="Liberation Sans" font-size="23.5" fill="#fff" text-anchor="middle">Clica</text>
  <defs><linearGradient id="tg" x1="0" y1="0" x2="0" y2="1"><stop offset="0" stop-color="#f7f7f7"/><stop offset="1" stop-color="#ececec"/></linearGradient></defs>
  <rect x="358.5" y="178.5" width="158" height="27.5" rx="3" fill="url(#tg)" stroke="#a9a9a9" stroke-width="1"/>
  <text x="437.5" y="200" font-family="Liberation Sans" font-size="23.3" fill="#3a3a3a" text-anchor="middle">Torna</text>
 </svg>
</div>
<!-- END GAME PANEL -->

<!-- HIERARCHY -->
<div class="a" style="left:877px;top:73px;width:611px;height:559px;background:#383838"></div>
<div class="a" style="left:877px;top:73px;width:611px;height:19px;background:#282828"></div>
<div class="a" style="left:877px;top:73px;width:96px;height:19px;background:#3c3c3c;border-radius:3px 3px 0 0"></div>
<div class="a" style="left:877px;top:92px;width:611px;height:20px;background:#3c3c3c"></div>
<div class="a" style="left:877px;top:128px;width:32px;height:504px;background:#323232"></div>
<div class="a" style="left:877px;top:112px;width:611px;height:16px;background:#2d2d2d"></div>
<div class="a" style="left:1159px;top:94.5px;width:325px;height:15px;background:#2a2a2a;border:1px solid #212121;border-radius:3px"></div>
<div class="a" style="left:1468px;top:95px;width:15.5px;height:14px;background:#383838;border-radius:0 3px 3px 0"></div>
<svg class="a" style="left:877px;top:73px" width="611" height="559">
 <path d="M9 6.5h10M11 10h8M11 13.5h8" stroke="#c4c4c4" stroke-width="1.6"/><path d="M8 5v10" stroke="#c4c4c4" stroke-width="0.8" stroke-dasharray="1.2 2"/>
 <path d="M7 29.5h12M13 23.5v12" stroke="#d0d0d0" stroke-width="1.8"/><path d="M23 27.5h7l-3.5 4z" fill="#c4c4c4"/>
 <path d="M34 45h8.5l-4.25 7.5z" fill="#7b7b7b"/>
 <g transform="translate(48,41)" fill="none" stroke="#eeeeee" stroke-width="1.9"><path d="M0.9 9.6 V3.9 L5 1.5 M7.4 1.5 L11.5 3.9 V9.6 M2 10.9 L6.2 13.2 L10.4 10.9 M2.8 5.3 L6.2 7.2 L9.6 5.3 M6.2 7.2 V13"/></g>
 <g transform="translate(61,57)"><path d="M6.5 0.8 L12 3.6 V9.6 L6.5 12.4 L1 9.6 V3.6Z M1 3.6 L6.5 6.4 L12 3.6 M6.5 6.4 V12.4" fill="none" stroke="#c4c4c4" stroke-width="1.1" stroke-linejoin="round"/></g><g transform="translate(61,73)"><path d="M6.5 0.8 L12 3.6 V9.6 L6.5 12.4 L1 9.6 V3.6Z M1 3.6 L6.5 6.4 L12 3.6 M6.5 6.4 V12.4" fill="none" stroke="#c4c4c4" stroke-width="1.1" stroke-linejoin="round"/></g><g transform="translate(61,89)"><path d="M6.5 0.8 L12 3.6 V9.6 L6.5 12.4 L1 9.6 V3.6Z M1 3.6 L6.5 6.4 L12 3.6 M6.5 6.4 V12.4" fill="none" stroke="#c4c4c4" stroke-width="1.1" stroke-linejoin="round"/></g><path d="M48 92h8.5l-4.25 7.5z" fill="#7b7b7b"/><g transform="translate(75,105)"><path d="M6.5 0.8 L12 3.6 V9.6 L6.5 12.4 L1 9.6 V3.6Z M1 3.6 L6.5 6.4 L12 3.6 M6.5 6.4 V12.4" fill="none" stroke="#c4c4c4" stroke-width="1.1" stroke-linejoin="round"/></g><path d="M62 108h8.5l-4.25 7.5z" fill="#7b7b7b"/><g transform="translate(89,121)"><path d="M6.5 0.8 L12 3.6 V9.6 L6.5 12.4 L1 9.6 V3.6Z M1 3.6 L6.5 6.4 L12 3.6 M6.5 6.4 V12.4" fill="none" stroke="#c4c4c4" stroke-width="1.1" stroke-linejoin="round"/></g><g transform="translate(75,137)"><path d="M6.5 0.8 L12 3.6 V9.6 L6.5 12.4 L1 9.6 V3.6Z M1 3.6 L6.5 6.4 L12 3.6 M6.5 6.4 V12.4" fill="none" stroke="#c4c4c4" stroke-width="1.1" stroke-linejoin="round"/></g><path d="M62 140h8.5l-4.25 7.5z" fill="#7b7b7b"/><g transform="translate(89,153)"><path d="M6.5 0.8 L12 3.6 V9.6 L6.5 12.4 L1 9.6 V3.6Z M1 3.6 L6.5 6.4 L12 3.6 M6.5 6.4 V12.4" fill="none" stroke="#c4c4c4" stroke-width="1.1" stroke-linejoin="round"/></g><g transform="translate(75,169)"><path d="M6.5 0.8 L12 3.6 V9.6 L6.5 12.4 L1 9.6 V3.6Z M1 3.6 L6.5 6.4 L12 3.6 M6.5 6.4 V12.4" fill="none" stroke="#c4c4c4" stroke-width="1.1" stroke-linejoin="round"/></g><path d="M62 172h8.5l-4.25 7.5z" fill="#7b7b7b"/><g transform="translate(89,185)"><path d="M6.5 0.8 L12 3.6 V9.6 L6.5 12.4 L1 9.6 V3.6Z M1 3.6 L6.5 6.4 L12 3.6 M6.5 6.4 V12.4" fill="none" stroke="#c4c4c4" stroke-width="1.1" stroke-linejoin="round"/></g><g transform="translate(61,201)"><path d="M6.5 0.8 L12 3.6 V9.6 L6.5 12.4 L1 9.6 V3.6Z M1 3.6 L6.5 6.4 L12 3.6 M6.5 6.4 V12.4" fill="none" stroke="#c4c4c4" stroke-width="1.1" stroke-linejoin="round"/></g>
 <circle cx="290" cy="29" r="2.2" fill="none" stroke="#9a9a9a" stroke-width="1.1"/><path d="M291.5 30.5l2 2" stroke="#9a9a9a" stroke-width="1.2"/><path d="M295 28h3l-1.5 2z" fill="#9a9a9a"/>
 <rect x="595.7" y="23.7" width="9" height="9" rx="1" fill="none" stroke="#c8c8c8" stroke-width="1.2"/><rect x="593.5" y="30.5" width="4.4" height="4.4" rx="0.6" fill="#383838" stroke="#c8c8c8" stroke-width="1.2"/><path d="M597.5 30.3 L602 25.8 M598.8 25.8 H602 V29" stroke="#c8c8c8" stroke-width="1.2" fill="none"/>
 <circle cx="599" cy="44.5" r="1.1" fill="#c4c4c4"/><circle cx="599" cy="48" r="1.1" fill="#c4c4c4"/><circle cx="599" cy="51.5" r="1.1" fill="#c4c4c4"/>
 <circle cx="598" cy="5" r="1.2" fill="#c4c4c4"/><circle cx="598" cy="9" r="1.2" fill="#c4c4c4"/><circle cx="598" cy="13" r="1.2" fill="#c4c4c4"/>
 <rect x="577.6" y="9.6" width="7.8" height="4.8" rx="0.8" fill="none" stroke="#c4c4c4" stroke-width="1.2"/><path d="M583.8 9.5 V6.4 A2.6 2.6 0 0 0 578.8 5.2" fill="none" stroke="#c4c4c4" stroke-width="1.2"/>
</svg>
<div class="t" style="left:901.5px;top:77.9px;font-size:12.45px;color:#c4c4c4">Hierarchy</div>
<div class="t" style="left:1177px;top:96.5px;font-size:11.5px;color:#6e6e6e">All</div>
<div class="t" style="left:941.5px;top:114.7px;font-size:12.5px;font-weight:bold;letter-spacing:0.6px;color:#d2d2d2">Character</div>
<div class="t" style="left:955.5px;top:131.1px;font-size:12.55px;color:#c4c4c4">Main Camera</div><div class="t" style="left:955.5px;top:147.1px;font-size:12.55px;color:#c4c4c4">SkyBackground</div><div class="t" style="left:955.5px;top:163.1px;font-size:12.55px;color:#c4c4c4">Canvas</div><div class="t" style="left:969.5px;top:179.1px;font-size:12.55px;color:#c4c4c4">Blue</div><div class="t" style="left:983.5px;top:195.1px;font-size:12.55px;color:#c4c4c4">Text (TMP)</div><div class="t" style="left:969.5px;top:211.1px;font-size:12.55px;color:#c4c4c4">Pink</div><div class="t" style="left:983.5px;top:227.1px;font-size:12.55px;color:#c4c4c4">Text (TMP)</div><div class="t" style="left:969.5px;top:243.1px;font-size:12.55px;color:#c4c4c4">Torna</div><div class="t" style="left:983.5px;top:259.1px;font-size:12.55px;color:#c4c4c4">Text (TMP)</div><div class="t" style="left:955.5px;top:275.1px;font-size:12.55px;color:#c4c4c4">EventSystem</div>
<!-- END HIERARCHY -->

<!-- PROJECT -->
<div class="a" style="left:877px;top:634px;width:611px;height:384px;background:#383838"></div>
<div class="a" style="left:877px;top:634px;width:611px;height:19px;background:#282828"></div>
<div class="a" style="left:877px;top:634px;width:81px;height:19px;background:#3c3c3c;border-radius:3px 3px 0 0;border-top:2px solid #3a72b0"></div>
<div class="a" style="left:877px;top:653px;width:611px;height:20px;background:#3c3c3c"></div>
<div class="a" style="left:1025.5px;top:655.5px;width:317px;height:15px;background:#2a2a2a;border:1px solid #212121;border-radius:3px"></div>
<div class="a" style="left:877px;top:673px;width:611px;height:1px;background:#2a2a2a"></div>
<div class="a" style="left:1085px;top:673px;width:1px;height:345px;background:#232323"></div>
<div class="a" style="left:1086px;top:674px;width:402px;height:20.5px;background:#3e3e3e"></div>

<div class="a" style="left:877px;top:673px;width:196px;height:345px;overflow:hidden"><div class="a" style="left:0;top:328px;width:196px;height:17px;background:#4b4b4b"></div><svg class="a" style="left:0;top:0" width="196" height="345">
 <path d="M60.0 -3.5 h4.5 l1.5 1.5 h6 v8.5 a1 1 0 0 1 -1 1 h-10 a1 1 0 0 1 -1 -1z" fill="#c4c4c4"/><g transform="translate(0,1.5)"><path d="M60.6 20.5 V11.1 H64.5 L66.0 12.7 H71.3 V15.0" fill="none" stroke="#c4c4c4" stroke-width="1.2"/><path d="M62.6 15.3 H73.6 L71.8 21.1 H60.0Z" fill="#c4c4c4"/></g><path d="M46.0 14.0h9l-4.5 8z" fill="#6f6f6f"/><g transform="translate(0,1.5)"><path d="M74.6 36.5 V27.1 H78.5 L80.0 28.7 H85.3 V31.0" fill="none" stroke="#c4c4c4" stroke-width="1.2"/><path d="M76.6 31.3 H87.6 L85.8 37.1 H74.0Z" fill="#c4c4c4"/></g><path d="M60.0 30.0h9l-4.5 8z" fill="#6f6f6f"/><path d="M88.0 44.5 h4.5 l1.5 1.5 h6 v8.5 a1 1 0 0 1 -1 1 h-10 a1 1 0 0 1 -1 -1z" fill="#c4c4c4"/><path d="M88.0 60.5 h4.5 l1.5 1.5 h6 v8.5 a1 1 0 0 1 -1 1 h-10 a1 1 0 0 1 -1 -1z" fill="#c4c4c4"/><g transform="translate(0,1.5)"><path d="M74.6 84.5 V75.1 H78.5 L80.0 76.7 H85.3 V79.0" fill="none" stroke="#c4c4c4" stroke-width="1.2"/><path d="M76.6 79.3 H87.6 L85.8 85.1 H74.0Z" fill="#c4c4c4"/></g><path d="M60.0 78.0h9l-4.5 8z" fill="#6f6f6f"/><path d="M88.0 92.5 h4.5 l1.5 1.5 h6 v8.5 a1 1 0 0 1 -1 1 h-10 a1 1 0 0 1 -1 -1z" fill="#c4c4c4"/><path d="M74.0 108.5 h4.5 l1.5 1.5 h6 v8.5 a1 1 0 0 1 -1 1 h-10 a1 1 0 0 1 -1 -1z" fill="#c4c4c4"/><path d="M74.0 124.5 h4.5 l1.5 1.5 h6 v8.5 a1 1 0 0 1 -1 1 h-10 a1 1 0 0 1 -1 -1z" fill="#c4c4c4"/><path d="M61.0 125.0v9.5l8 -4.75z" fill="#6f6f6f"/><path d="M74.0 140.5 h4.5 l1.5 1.5 h6 v8.5 a1 1 0 0 1 -1 1 h-10 a1 1 0 0 1 -1 -1z" fill="#c4c4c4"/><path d="M60.0 156.5 h4.5 l1.5 1.5 h6 v8.5 a1 1 0 0 1 -1 1 h-10 a1 1 0 0 1 -1 -1z" fill="#c4c4c4"/><path d="M47.0 157.0v9.5l8 -4.75z" fill="#6f6f6f"/><path d="M60.0 172.5 h4.5 l1.5 1.5 h6 v8.5 a1 1 0 0 1 -1 1 h-10 a1 1 0 0 1 -1 -1z" fill="#c4c4c4"/><path d="M47.0 173.0v9.5l8 -4.75z" fill="#6f6f6f"/><path d="M60.0 188.5 h4.5 l1.5 1.5 h6 v8.5 a1 1 0 0 1 -1 1 h-10 a1 1 0 0 1 -1 -1z" fill="#c4c4c4"/><path d="M47.0 189.0v9.5l8 -4.75z" fill="#6f6f6f"/><path d="M60.0 204.5 h4.5 l1.5 1.5 h6 v8.5 a1 1 0 0 1 -1 1 h-10 a1 1 0 0 1 -1 -1z" fill="#c4c4c4"/><path d="M60.0 220.5 h4.5 l1.5 1.5 h6 v8.5 a1 1 0 0 1 -1 1 h-10 a1 1 0 0 1 -1 -1z" fill="#c4c4c4"/><path d="M47.0 221.0v9.5l8 -4.75z" fill="#6f6f6f"/><path d="M60.0 236.5 h4.5 l1.5 1.5 h6 v8.5 a1 1 0 0 1 -1 1 h-10 a1 1 0 0 1 -1 -1z" fill="#c4c4c4"/><path d="M47.0 237.0v9.5l8 -4.75z" fill="#6f6f6f"/><path d="M60.0 252.5 h4.5 l1.5 1.5 h6 v8.5 a1 1 0 0 1 -1 1 h-10 a1 1 0 0 1 -1 -1z" fill="#c4c4c4"/><path d="M60.0 268.5 h4.5 l1.5 1.5 h6 v8.5 a1 1 0 0 1 -1 1 h-10 a1 1 0 0 1 -1 -1z" fill="#c4c4c4"/><path d="M60.0 284.5 h4.5 l1.5 1.5 h6 v8.5 a1 1 0 0 1 -1 1 h-10 a1 1 0 0 1 -1 -1z" fill="#c4c4c4"/><path d="M60.0 300.5 h4.5 l1.5 1.5 h6 v8.5 a1 1 0 0 1 -1 1 h-10 a1 1 0 0 1 -1 -1z" fill="#c4c4c4"/><path d="M47.0 301.0v9.5l8 -4.75z" fill="#6f6f6f"/><path d="M60.0 316.5 h4.5 l1.5 1.5 h6 v8.5 a1 1 0 0 1 -1 1 h-10 a1 1 0 0 1 -1 -1z" fill="#c4c4c4"/>
 <path d="M31.0 331.5 h4.5 l1.5 1.5 h6 v8.5 a1 1 0 0 1 -1 1 h-10 a1 1 0 0 1 -1 -1z" fill="#c4c4c4"/>
</svg><div class="t" style="left:76.0px;top:-5.5px;font-size:12.7px;color:#c4c4c4">Backgrounds</div><div class="t" style="left:76.0px;top:10.5px;font-size:12.7px;color:#c4c4c4">Characters</div><div class="t" style="left:90.0px;top:26.5px;font-size:12.7px;color:#c4c4c4">Animation</div><div class="t" style="left:104.0px;top:42.5px;font-size:12.7px;color:#c4c4c4">Astronaut</div><div class="t" style="left:104.0px;top:58.5px;font-size:12.7px;color:#c4c4c4">Detective</div><div class="t" style="left:90.0px;top:74.5px;font-size:12.7px;color:#c4c4c4">Blob Players</div><div class="t" style="left:104.0px;top:90.5px;font-size:12.7px;color:#c4c4c4">Animation</div><div class="t" style="left:90.0px;top:106.5px;font-size:12.7px;color:#c4c4c4">Fantasy</div><div class="t" style="left:90.0px;top:122.5px;font-size:12.7px;color:#c4c4c4">Soldiers</div><div class="t" style="left:90.0px;top:138.5px;font-size:12.7px;color:#c4c4c4">Stickman</div><div class="t" style="left:76.0px;top:154.5px;font-size:12.7px;color:#c4c4c4">Effects</div><div class="t" style="left:76.0px;top:170.5px;font-size:12.7px;color:#c4c4c4">Enemies</div><div class="t" style="left:76.0px;top:186.5px;font-size:12.7px;color:#c4c4c4">Environment</div><div class="t" style="left:76.0px;top:202.5px;font-size:12.7px;color:#c4c4c4">Extra</div><div class="t" style="left:76.0px;top:218.5px;font-size:12.7px;color:#c4c4c4">Food &amp; Plants</div><div class="t" style="left:76.0px;top:234.5px;font-size:12.7px;color:#c4c4c4">Items &amp; Icons</div><div class="t" style="left:76.0px;top:250.5px;font-size:12.7px;color:#c4c4c4">Platforms</div><div class="t" style="left:76.0px;top:266.5px;font-size:12.7px;color:#c4c4c4">Shapes</div><div class="t" style="left:76.0px;top:282.5px;font-size:12.7px;color:#c4c4c4">Sounds</div><div class="t" style="left:76.0px;top:298.5px;font-size:12.7px;color:#c4c4c4">UI</div><div class="t" style="left:76.0px;top:314.5px;font-size:12.7px;color:#c4c4c4">Weapons &amp; Tools</div><div class="t" style="left:48.0px;top:330.5px;font-size:12.7px;color:#c4c4c4">Scenes</div></div>
<div class="a" style="left:1072px;top:673px;width:13px;height:345px;background:#323232"></div>
<div class="a" style="left:1086px;top:997px;width:402px;height:21px;background:#3e3e3e"></div>
<div class="a" style="left:1074px;top:757px;width:9px;height:170px;background:#5e5e5e;border-radius:4.5px"></div>

<svg class="a" style="left:877px;top:634px" width="611" height="384">
 <path d="M8 6 h5 l1.5 1.5 h6.5 v8 h-13z" fill="#c4c4c4"/>
 <path d="M7 29.5h12M13 23.5v12" stroke="#d0d0d0" stroke-width="1.8"/><path d="M23 27.5h7l-3.5 4z" fill="#c4c4c4"/>
 <circle cx="156" cy="28.5" r="2.3" fill="none" stroke="#b0b0b0" stroke-width="1.2"/><path d="M157.5 30l2.2 2.2" stroke="#b0b0b0" stroke-width="1.3"/>
 <rect x="454.2" y="23.2" width="9" height="9" rx="1" fill="none" stroke="#c8c8c8" stroke-width="1.2"/><rect x="452" y="30" width="4.4" height="4.4" rx="0.6" fill="#383838" stroke="#c8c8c8" stroke-width="1.2"/><path d="M456 29.8 L460.5 25.3 M457.3 25.3 H460.5 V28.5" stroke="#c8c8c8" stroke-width="1.2" fill="none"/>
 <rect x="468" y="19" width="1" height="20" fill="#2a2a2a"/><rect x="494" y="19" width="1" height="20" fill="#2a2a2a"/><rect x="520" y="19" width="1" height="20" fill="#2a2a2a"/><rect x="546" y="19" width="1" height="20" fill="#2a2a2a"/><rect x="572" y="19" width="1" height="20" fill="#2a2a2a"/>
 <rect x="476" y="22" width="5" height="5" fill="#c4c4c4"/><circle cx="478.5" cy="31" r="3.3" fill="#c4c4c4"/><path d="M482 26 l3 5.5 h-6z" fill="#c4c4c4"/>
 <path d="M501 29.5 l5 -5 h4 v4 l-5 5z" fill="#c4c4c4"/><circle cx="508" cy="26.5" r="0.9" fill="#3c3c3c"/>
 <path d="M529.5 22.5 h5 l3 3 v5 l-3 3 h-5 l-3 -3 v-5z" fill="#c4c4c4"/><rect x="531.3" y="24.5" width="1.4" height="5" fill="#3c3c3c"/><rect x="531.3" y="30.5" width="1.4" height="1.4" fill="#3c3c3c"/>
 <path d="M558.5 22.5 l1.8 3.8 4 .4 -3 2.7 .9 4 -3.7 -2.1 -3.7 2.1 .9 -4 -3 -2.7 4 -.4z" fill="#8c8c8c"/>
 <path d="M579 28 Q585 22 591 28 Q585 34 579 28Z" fill="none" stroke="#b0b0b0" stroke-width="1.2"/><path d="M580 33.5 L590 22.5" stroke="#b0b0b0" stroke-width="1.2"/>
 <rect x="577.6" y="9.6" width="7.8" height="4.8" rx="0.8" fill="none" stroke="#c4c4c4" stroke-width="1.2"/><path d="M583.8 9.5 V6.4 A2.6 2.6 0 0 0 578.8 5.2" fill="none" stroke="#c4c4c4" stroke-width="1.2"/>
 <circle cx="598" cy="5.5" r="1.2" fill="#c4c4c4"/><circle cx="598" cy="9.5" r="1.2" fill="#c4c4c4"/><circle cx="598" cy="13.5" r="1.2" fill="#c4c4c4"/>
 <path d="M196.5 52 l4 -4.5 l4 4.5z" fill="#c4c4c4"/><path d="M196.5 373 l4 4.5 l4 -4.5z" fill="#c4c4c4"/>
 <path d="M259 45.5 l4 3.5 l-4 3.5" fill="none" stroke="#9a9a9a" stroke-width="1.2"/>
 <g transform="translate(226,61.5)" fill="none" stroke="#e0e0e0" stroke-width="1.9"><path d="M0.9 9.6 V3.9 L5 1.5 M7.4 1.5 L11.5 3.9 V9.6 M2 10.9 L6.2 13.2 L10.4 10.9 M2.8 5.3 L6.2 7.2 L9.6 5.3 M6.2 7.2 V13"/></g><g transform="translate(226,77.5)" fill="none" stroke="#e0e0e0" stroke-width="1.9"><path d="M0.9 9.6 V3.9 L5 1.5 M7.4 1.5 L11.5 3.9 V9.6 M2 10.9 L6.2 13.2 L10.4 10.9 M2.8 5.3 L6.2 7.2 L9.6 5.3 M6.2 7.2 V13"/></g>
 <rect x="545" y="373.3" width="50" height="1.6" fill="#5f5f5f"/><circle cx="545.5" cy="374.2" r="5" fill="#9a9a9a"/>
</svg>
<div class="t" style="left:901.5px;top:639px;font-size:12.9px;color:#c4c4c4">Project</div>
<div class="t" style="left:1472px;top:657.5px;font-size:12.3px;color:#b0b0b0">21</div>
<div class="t" style="left:1090px;top:678px;font-size:12.3px;color:#a8a8a8">Assets</div>
<div class="t" style="left:1146px;top:677.5px;font-size:12.8px;font-weight:bold;color:#c8c8c8">Scenes</div>
<div class="t" style="left:1120px;top:697px;font-size:13.4px;color:#c4c4c4">Character</div>
<div class="t" style="left:1120px;top:713px;font-size:13.4px;color:#c4c4c4">Portada</div>


<!-- END PROJECT -->

<!-- INSPECTOR -->
<div class="a" style="left:1490px;top:73px;width:430px;height:945px;background:#383838"></div>
<div class="a" style="left:1490px;top:73px;width:430px;height:19px;background:#282828"></div>
<div class="a" style="left:1490px;top:73px;width:95px;height:19px;background:#3c3c3c;border-radius:3px 3px 0 0"></div>
<svg class="a" style="left:1490px;top:73px" width="430" height="19">
 <circle cx="14.5" cy="10" r="5" fill="#c4c4c4"/><rect x="13.7" y="9" width="1.6" height="4" fill="#3c3c3c"/><rect x="13.7" y="6.5" width="1.6" height="1.5" fill="#3c3c3c"/>
 <rect x="395.1" y="9.6" width="7.8" height="4.8" rx="0.8" fill="none" stroke="#c4c4c4" stroke-width="1.2"/><path d="M401.3 9.5 V6.4 A2.6 2.6 0 0 0 396.3 5.2" fill="none" stroke="#c4c4c4" stroke-width="1.2"/>
 <circle cx="416" cy="5" r="1.2" fill="#c4c4c4"/><circle cx="416" cy="9" r="1.2" fill="#c4c4c4"/><circle cx="416" cy="13" r="1.2" fill="#c4c4c4"/>
</svg>
<div class="t" style="left:1514px;top:77.9px;font-size:12.9px;color:#c4c4c4">Inspector</div>
<!-- END INSPECTOR -->
<!-- MAIN TOOLBAR RIGHT -->
<div class="a" style="left:1676px;top:49px;width:30px;height:18px;background:#383838"></div>
<div class="a" style="left:1712px;top:49px;width:30px;height:18px;background:#383838"></div>
<div class="a" style="left:1748px;top:49px;width:78px;height:18px;background:#383838"></div>
<div class="a" style="left:1832px;top:49px;width:78px;height:18px;background:#383838"></div>
<svg class="a" style="left:1670px;top:43px" width="250" height="30">
 <path d="M15.6 12.6 A5.8 5.8 0 1 1 15.8 18" fill="none" stroke="#c8c8c8" stroke-width="1.5"/><path d="M14 9.8 L14.6 14.2 L18.6 13Z" fill="#c8c8c8"/><path d="M20.6 11.2 V15.6 H23.4" fill="none" stroke="#c8c8c8" stroke-width="1.7"/>
 <circle cx="55.2" cy="13.8" r="4.2" fill="none" stroke="#c8c8c8" stroke-width="1.5"/><path d="M58.3 17 L62 20.8" stroke="#c8c8c8" stroke-width="2"/>
 <path d="M145 13H152L148.5 17Z M229 13H236L232.5 17Z" fill="#c4c4c4"/>
</svg>
<div class="t" style="left:1751px;top:53px;font-size:12.3px;color:#c4c4c4">Layers</div>
<div class="t" style="left:1835px;top:53px;font-size:12.3px;color:#c4c4c4">Layout</div>
<!-- STATUS BAR -->
<svg class="a" style="left:0;top:1018px" width="1920" height="22">
 <circle cx="9" cy="10.5" r="6.3" fill="#c8c8c8"/><path d="M11 15 l3 2.5 l-0.5 -4z" fill="#c8c8c8"/><rect x="8" y="6" width="2" height="5.5" fill="#191919"/><rect x="8" y="12.5" width="2" height="2" fill="#191919"/>
 <rect x="1816" y="2" width="1" height="20" fill="#2a2a2a"/><rect x="1841" y="2" width="1" height="20" fill="#2a2a2a"/><rect x="1867" y="2" width="1" height="20" fill="#2a2a2a"/><rect x="1893" y="2" width="1" height="20" fill="#2a2a2a"/><g fill="#c8c8c8"><ellipse cx="1828" cy="13" rx="4.8" ry="5.5"/><ellipse cx="1828" cy="7" rx="3" ry="2.2"/></g><path d="M1822 6 l2.5 2 M1834 6 l-2.5 2 M1821.5 12 h2 M1834.5 12 h-2 M1822 18.5 l2.5 -2 M1834 18.5 l-2.5 -2" stroke="#c8c8c8" stroke-width="1.3"/><path d="M1821.5 4.5 L1835 18.5" stroke="#191919" stroke-width="2.6"/><path d="M1821.5 4.5 L1835 18.5" stroke="#c8c8c8" stroke-width="1"/><g fill="#c8c8c8"><ellipse cx="1854" cy="7" rx="6" ry="2.6"/><path d="M1848 9.5 q6 3.5 12 0 v2.5 q-6 3.5 -12 0z M1848 14 q6 3.5 12 0 v2.5 q-6 3.5 -12 0z"/></g><path d="M1847.5 4.5 L1861 18.5" stroke="#191919" stroke-width="2.6"/><path d="M1847.5 4.5 L1861 18.5" stroke="#c8c8c8" stroke-width="1"/><g fill="none" stroke="#c8c8c8" stroke-width="1.5"><path d="M1874.5 9 A6.5 6.5 0 0 1 1886 8 M1886 15 A6.5 6.5 0 0 1 1874.5 16"/></g><circle cx="1880" cy="11" r="2.8" fill="#c8c8c8"/><rect x="1879" y="13" width="2" height="3" fill="#c8c8c8"/><path d="M1873.5 4.5 L1887 18.5" stroke="#191919" stroke-width="2.6"/><path d="M1873.5 4.5 L1887 18.5" stroke="#c8c8c8" stroke-width="1"/><g fill="none" stroke="#c8c8c8" stroke-width="1.3"><circle cx="1906" cy="12" r="6.8"/><path d="M1903 12 l2.2 2.2 l4 -4" stroke-width="1.6"/></g>
</svg>
<div class="t" style="left:21px;top:1023px;font-size:12.7px;color:#c4c4c4">[TMP Essential Resources] have been imported.</div>
<!-- TASKBAR -->
<div class="a" style="left:0;top:1040px;width:1920px;height:40px;background:#191919"></div>
<div class="a" style="left:48px;top:1040px;width:288px;height:40px;background:#2f2f2f;border:1px solid #5a5a5a;border-bottom:none"></div>
<div class="a" style="left:631px;top:1040px;width:48px;height:40px;background:#464646"></div>
<div class="a" style="left:631px;top:1078px;width:48px;height:2px;background:#76b9ed"></div>
<div class="a" style="left:685px;top:1078px;width:39px;height:2px;background:#76b9ed"></div>
<div class="a" style="left:1915px;top:1042px;width:1px;height:38px;background:#555"></div>
<svg class="a" style="left:0;top:1040px" width="1920" height="40">
 <path d="M16 12.6 l6.8 -1 v7.7 h-6.8z M23.8 11.5 l8.2 -1.2 v9 h-8.2z M16 20.3 h6.8 v7.7 l-6.8 -1z M23.8 20.3 h8.2 v9 l-8.2 -1.2z" fill="#fff"/>
 <circle cx="71" cy="18" r="5.5" fill="none" stroke="#fff" stroke-width="1.3"/><path d="M67 22 l-6 6" stroke="#fff" stroke-width="1.5"/>
 <path d="M257 40 L270 25 H326 L336 40Z" fill="#ecc99a"/>
 <path d="M269 14 l13 -4 l13 1 l3 15 l-14 6 l-13 -2z" fill="#3aa648"/><path d="M270 13 l12 -3.5 l1 18 l-11 3z M283 9.5 l12 1.5 l1 14 l-12 3.5z" fill="#eeeaf5"/>
 <path d="M288 17 l8 -11 l3 2 l-8 11z" fill="#f2b72f"/><path d="M296 6 l2 -2 l3 2 l-2 2z" fill="#f0634f"/>
 <path d="M306 13 q0 -10 10 -10 q10 0 10 10 v17 q0 4 -4 4 h-12 q-4 0 -4 -4z" fill="#1f7ef0"/><path d="M308 25 q0 -8 8 -8 q8 0 8 8 v5 h-16z" fill="#1a6fe0"/><path d="M309 30 h14" stroke="#d38cf5" stroke-width="1.2"/>
 <circle cx="360" cy="19.5" r="7.3" fill="none" stroke="#fff" stroke-width="2"/>
 <g fill="none" stroke="#fff" stroke-width="1.5"><path d="M401 13h12M401 26h12"/><rect x="402.5" y="16.5" width="9" height="6"/></g><path d="M415 13v2M415 17.5v8.5" stroke="#fff" stroke-width="1.5"/>
 <rect x="447" y="8" width="24" height="24" rx="3" fill="#f07f24"/><path d="M451 12 q4 -2 8 3 q4 -5 8 -3 q2 4 -3 8 q5 4 3 8 q-4 2 -8 -3 q-4 5 -8 3 q-2 -4 3 -8 q-5 -4 -3 -8z" fill="none" stroke="#fff" stroke-width="2.6"/>
 <path d="M497 11 h8 l2 2 h12 v16 h-22z" fill="#f5c237"/><path d="M497 16 h22 v13 h-22z" fill="#fcd54d"/><path d="M503 29 v-6 h10 v6 h-2.5 v-3 h-5 v3z" fill="#2e8be0"/>
 <circle cx="557" cy="20" r="12" fill="#db4437"/><path d="M557 20 L547 26 A12 12 0 0 1 546 13Z" fill="#0f9d58"/><path d="M557 20 L567.4 14 A12 12 0 0 1 557 32 L548 26Z" fill="#f4c20d"/><path d="M546.6 14 A12 12 0 0 1 568 14 H557Z" fill="#db4437"/><circle cx="557" cy="20" r="5.5" fill="#fff"/><circle cx="557" cy="20" r="4.3" fill="#4285f4"/>
 <path d="M610 8 l8 4 v16 l-8 4 l-13 -12 l-3 2.5 l-2 -1 v-7 l2 -1 l3 2.5z M610 14 l-7 6 l7 6z" fill="#2489ca"/><path d="M610 8 l8 4 v16 l-8 4z" fill="#1f9cf0"/>
 <path d="M655 8.5 L664.8 14 V25.5 L655 31 L645.2 25.5 V14Z" fill="#7c7c7c"/><path d="M664.8 14 V25.5 L655 31 V20Z" fill="#050505"/><g transform="translate(648,12.2) scale(1.1)" fill="none" stroke="#f4f4f4" stroke-width="2.2"><path d="M0.9 9.6 V3.9 L5 1.5 M7.4 1.5 L11.5 3.9 V9.6 M2 10.9 L6.2 13.2 L10.4 10.9 M2.8 5.3 L6.2 7.2 L9.6 5.3 M6.2 7.2 V13"/></g>
 <rect x="693.5" y="8.8" width="21.5" height="21.5" fill="#0c0860" stroke="#8ccbff" stroke-width="1.5"/><text x="704.3" y="24.5" font-family="Liberation Sans" font-weight="bold" font-size="12.5" fill="#8ccbff" text-anchor="middle">Ps</text>
 <defs><linearGradient id="cl" x1="0" y1="0" x2="0" y2="1"><stop offset="0" stop-color="#b8d4f2"/><stop offset="0.55" stop-color="#d9e8f7"/><stop offset="1" stop-color="#8db7ea"/></linearGradient></defs><circle cx="1496" cy="15.5" r="5.8" fill="#f29a1f"/><path d="M1481.5 31.5 Q1477.5 31.5 1477.5 27.5 Q1477.5 23.5 1482 23 Q1483 17.5 1488.5 17.5 Q1493 17.5 1494.5 21.5 Q1497.5 20.5 1500.5 23 Q1504 24.5 1504 27.8 Q1504 31.5 1499.5 31.5Z" fill="url(#cl)"/>
 <path d="M1678 23 l4.5 -4.5 l4.5 4.5" fill="none" stroke="#fff" stroke-width="1.3"/>
 <rect x="1701" y="17" width="12" height="7" fill="none" stroke="#fff" stroke-width="1.2"/><rect x="1713.5" y="19" width="1.5" height="3" fill="#fff"/><path d="M1700 14v5M1703 14v3M1698 18h5" stroke="#fff" stroke-width="1.1"/>
 <path d="M1727 27 a8 8 0 0 1 10 -9 M1730 27 a5 5 0 0 1 6 -6 M1733 27 a2.5 2.5 0 0 1 2.5 -2.5" fill="none" stroke="#fff" stroke-width="1.2"/><circle cx="1736" cy="26.5" r="1.1" fill="#fff"/>
 <path d="M1748 16.5 h3 l4 -3.5 v13 l-4 -3.5 h-3z" fill="none" stroke="#fff" stroke-width="1.2"/><path d="M1757.5 17 q1.5 3 0 6M1760 15 q2.5 5 0 10M1762.5 13.5 q3.5 6.5 0 13" fill="none" stroke="#fff" stroke-width="1.1"/>
 <path d="M1879 13 h17 v11 h-9 l-3 3 v-3 h-5z" fill="#fff"/><path d="M1882 16.5h11M1882 19h11M1882 21.5h8" stroke="#191919" stroke-width="0.9"/>
</svg>
<div class="t" style="left:88px;top:1053.5px;font-size:14.4px;color:#f0f0f0">Escriu aquí per cercar</div>
<div class="t" style="left:1511px;top:1054px;font-size:13.6px;color:#fff">18°C&nbsp;&nbsp;Mayorm. nubla...</div>
<div class="t" style="left:1774px;top:1053px;font-size:12.3px;color:#fff">CAT</div>
<div class="t" style="left:1822px;top:1045px;font-size:11.5px;color:#fff">14:09</div>
<div class="t" style="left:1809px;top:1062px;font-size:12px;color:#fff">19/2/2024</div>
<!-- FILE MENU -->
<div class="a" style="left:0;top:42px;width:290px;height:298px;background:#f0f0f0;border:1px solid #a0a0a0;border-top:1px solid #d9d9d9;box-shadow:2px 2px 3px rgba(0,0,0,0.35)"></div>
<div class="a" style="left:3px;top:264px;width:284px;height:22px;background:#91c9f7"></div>
<div class="a" style="left:31px;top:114px;width:256px;height:1px;background:#d7d7d7"></div>
<div class="a" style="left:31px;top:187px;width:256px;height:1px;background:#d7d7d7"></div>
<div class="a" style="left:31px;top:260px;width:256px;height:1px;background:#d7d7d7"></div>
<div class="a" style="left:31px;top:311px;width:256px;height:1px;background:#d7d7d7"></div>
<div class="t" style="left:35px;top:50px;color:#000;font-size:11.6px">New Scene</div>
<div class="t" style="right:1651px;top:50px;color:#000;font-size:11.6px">Ctrl+N</div>
<div class="t" style="left:35px;top:72px;color:#000;font-size:11.6px">Open Scene</div>
<div class="t" style="right:1651px;top:72px;color:#000;font-size:11.6px">Ctrl+O</div>
<div class="t" style="left:35px;top:94px;color:#000;font-size:11.6px">Open Recent Scene</div>
<div class="t" style="left:35px;top:124px;color:#000;font-size:11.6px">Save</div>
<div class="t" style="right:1651px;top:124px;color:#000;font-size:11.6px">Ctrl+S</div>
<div class="t" style="left:35px;top:146px;color:#000;font-size:11.6px">Save As...</div>
<div class="t" style="right:1651px;top:146px;color:#000;font-size:11.6px">Ctrl+Shift+S</div>
<div class="t" style="left:35px;top:167.5px;color:#000;font-size:11.6px">Save As Scene Template...</div>
<div class="t" style="left:35px;top:196px;color:#000;font-size:11.6px">New Project...</div>
<div class="t" style="left:35px;top:218px;color:#000;font-size:11.6px">Open Project...</div>
<div class="t" style="left:35px;top:240px;color:#000;font-size:11.6px">Save Project</div>
<div class="t" style="left:35px;top:269px;color:#000;font-size:11.6px">Build Settings...</div>
<div class="t" style="right:1651px;top:269px;color:#000;font-size:11.6px">Ctrl+Shift+B</div>
<div class="t" style="left:35px;top:291px;color:#000;font-size:11.6px">Build And Run</div>
<div class="t" style="right:1651px;top:291px;color:#000;font-size:11.6px">Ctrl+B</div>
<div class="t" style="left:35px;top:320px;color:#000;font-size:11.6px">Exit</div>
<svg class="a" style="left:272px;top:95px" width="8" height="10"><path d="M1.5 1.5L5.5 5L1.5 8.5" fill="none" stroke="#222" stroke-width="1.1"/></svg>
<!-- END FILE MENU -->

<!-- ANNOTATION ARROWS -->
<svg class="a" style="left:0;top:0" width="1920" height="1080">
 <path d="M582 395 L145 276" stroke="#fff" stroke-width="2.2" stroke-linecap="round"/>
 <path d="M131.5 272.3 L151.3 272.3 L148.5 282Z" fill="#fff"/>
 <path d="M0 78 L14.5 40.5" stroke="#fff" stroke-width="2.2"/>
 <path d="M20.8 23.6 L9.2 39.7 L18.3 42.8Z" fill="#fff"/>
</svg>
</body></html>
